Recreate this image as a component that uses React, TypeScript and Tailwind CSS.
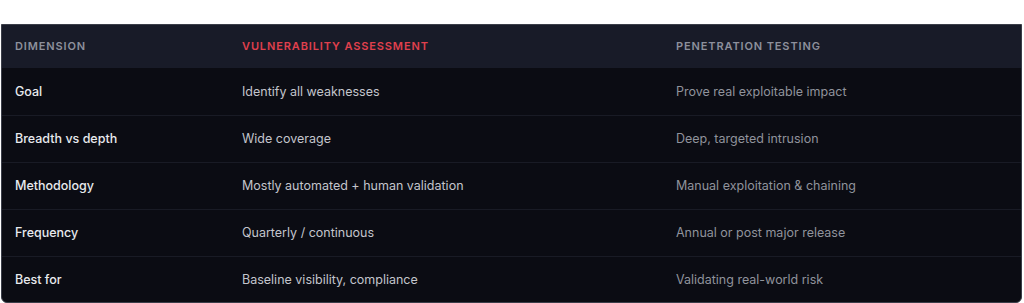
import React from "react";

const rows = [
  ["Goal", "Identify all weaknesses", "Prove real exploitable impact"],
  ["Breadth vs depth", "Wide coverage", "Deep, targeted intrusion"],
  ["Methodology", "Mostly automated + human validation", "Manual exploitation & chaining"],
  ["Frequency", "Quarterly / continuous", "Annual or post major release"],
  ["Best for", "Baseline visibility, compliance", "Validating real-world risk"],
];

export default function App() {
  return (
    <div className="w-[1024px] h-[303px] bg-white pt-[24px] pl-[1px] pr-[2px] font-['Inter',sans-serif]">
      <div className="w-full border border-[#3b3e49] rounded-b-[6px] overflow-hidden bg-[#0b0c13]">
        <div className="grid grid-cols-[226px_434px_1fr] h-[43px] items-center bg-[#181b28] text-[11px] font-semibold uppercase tracking-[0.08em]">
          <div className="pl-[13px] text-[#8d909c]">Dimension</div>
          <div className="pl-[14px] text-[#e0404d]">Vulnerability Assessment</div>
          <div className="pl-[14px] text-[#8d909c]">Penetration Testing</div>
        </div>
        {rows.map((r, i) => (
          <div
            key={i}
            className={`grid grid-cols-[226px_434px_1fr] items-center pt-[1px] text-[12.5px] ${i > 0 ? "border-t border-[#191b25]" : ""} ${i === rows.length - 1 ? "h-[46px]" : "h-[47px]"}`}
          >
            <div className="pl-[13px] text-[#e8eaee] font-medium">{r[0]}</div>
            <div className="pl-[14px] text-[#c3c5cc]">{r[1]}</div>
            <div className="pl-[14px] text-[#90939c]">{r[2]}</div>
          </div>
        ))}
      </div>
    </div>
  );
}
